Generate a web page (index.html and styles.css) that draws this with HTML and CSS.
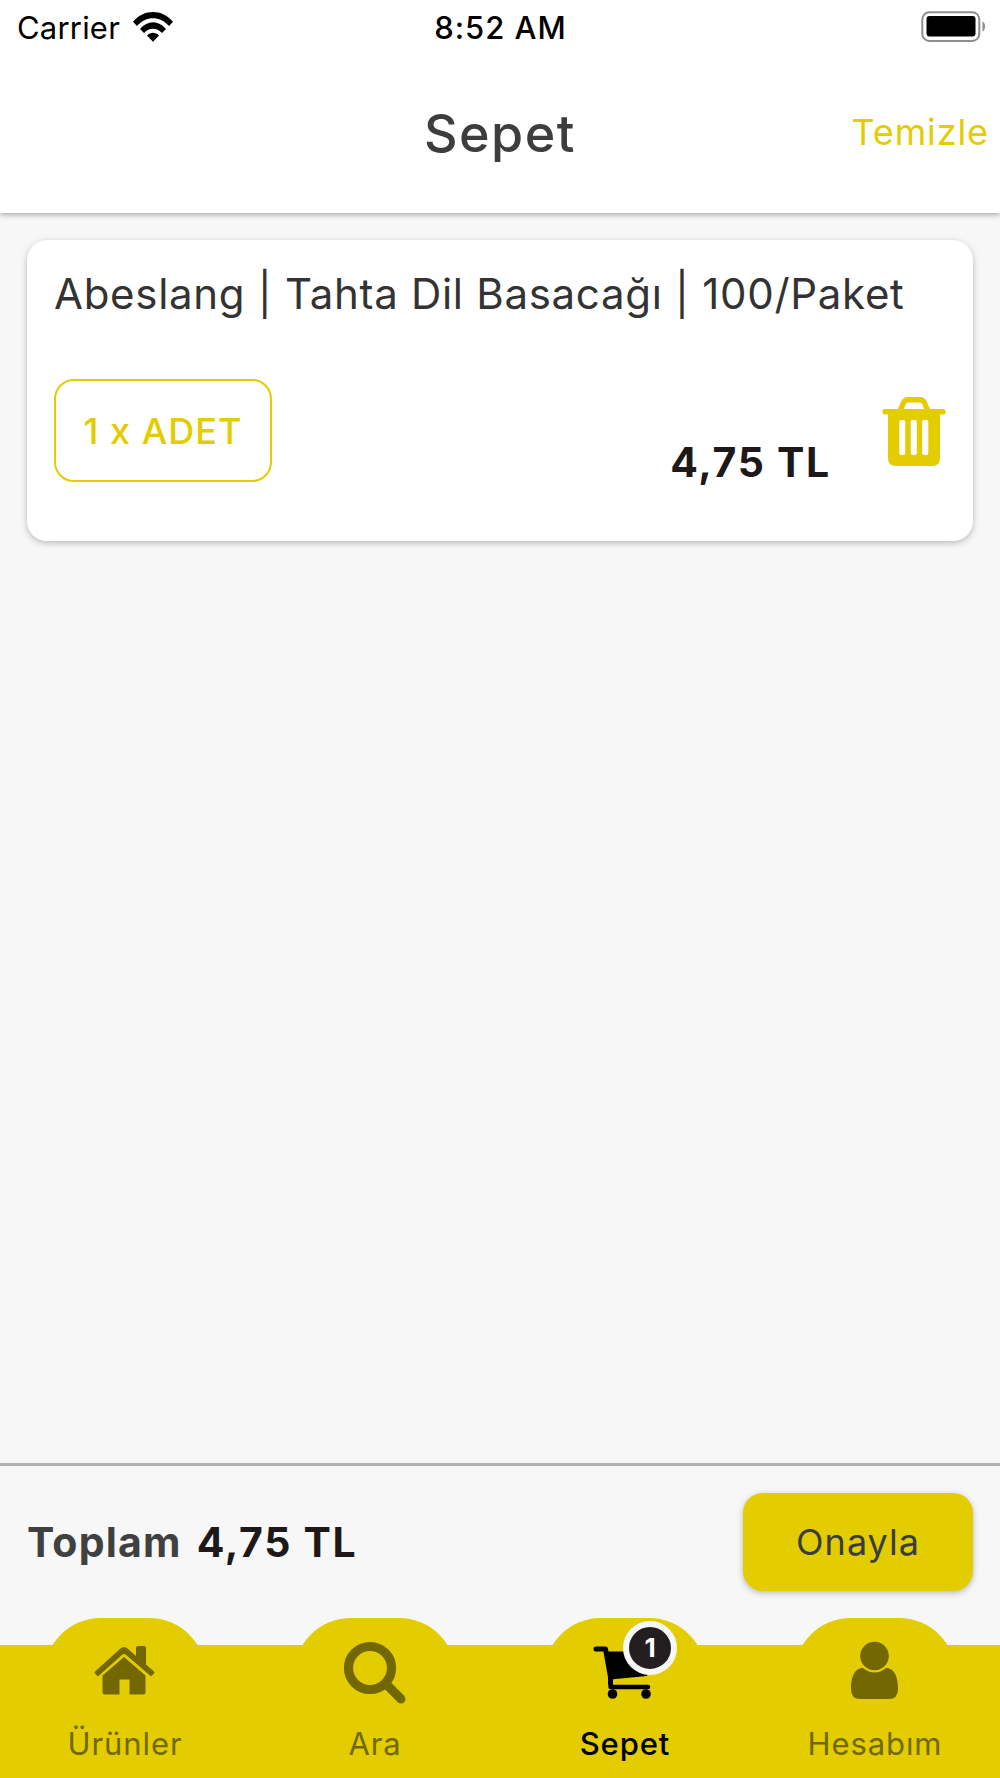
FILE: index.html
```
<!DOCTYPE html>
<html lang="tr">
<head>
  <meta charset="UTF-8">
  <meta name="viewport" content="width=device-width, initial-scale=1.0">
  <title>Sepet</title>
  <link rel="stylesheet" href="styles.css">
</head>
<body>

<div class="screen">
  <header class="header">
    <div class="status-bar">
      <div class="carrier">
        <span>Carrier</span>
        <svg class="wifi" viewBox="0 0 40 30">
          <path d="M0 9.8C11-3.2 29-3.2 40 9.8L36 14C27 3.6 13 3.6 4 14Z"/>
          <path d="M7 17C14.5 8 25.5 8 33 17L29 21C24 15.2 16 15.2 11 21Z"/>
          <path d="M14 23.6C17.5 19.8 22.5 19.8 26 23.6L20 29.8Z"/>
        </svg>
      </div>
      <span class="time">8:52 AM</span>
      <svg class="battery" viewBox="0 0 65 32">
        <rect x="1.3" y="1.3" width="57" height="28.6" rx="7" fill="none" stroke="#8e8e8e" stroke-width="2"/>
        <rect x="5.5" y="5" width="49" height="20.5" rx="3"/>
        <path d="M61.5 10.5C65 12 65 19 61.5 20.5Z" fill="#8e8e8e"/>
      </svg>
    </div>
    <div class="nav-bar">
      <h1 class="nav-title">Sepet</h1>
      <a class="nav-clear">Temizle</a>
    </div>
  </header>

  <main class="content">
    <div class="card">
      <h2 class="product-name">Abeslang | Tahta Dil Basacağı | 100/Paket</h2>
      <div class="card-row">
        <button class="unit-button">1 x ADET</button>
        <span class="price">4,75 TL</span>
        <svg class="trash" viewBox="0 0 64 70">
          <path fill-rule="evenodd" d="M2 12H16L19.5 4Q21.5 0 26 0H38Q42.5 0 44.5 4L48 12H61.5Q63.5 12 63.5 14V15.5Q63.5 17.5 61.5 17.5H58V61Q58 69 50 69H14Q6 69 6 61V17.5H2.5Q0.5 17.5 0.5 15.5V14Q0.5 12 2 12ZM22 12H42L40.5 7.5Q39.5 5.5 37.5 5.5H26.5Q24.5 5.5 23.5 7.5ZM19 23Q17.3 23 17.3 25V56Q17.3 58 19 58H21.5Q23.3 58 23.3 56V25Q23.3 23 21.5 23ZM30.5 23Q28.7 23 28.7 25V56Q28.7 58 30.5 58H33Q34.8 58 34.8 56V25Q34.8 23 33 23ZM42 23Q40.2 23 40.2 25V56Q40.2 58 42 58H44.5Q46.3 58 46.3 56V25Q46.3 23 44.5 23Z"/>
        </svg>
      </div>
    </div>
  </main>

  <div class="total-bar">
    <div class="total">
      <span class="total-label">Toplam</span>
      <span class="total-value">4,75 TL</span>
    </div>
    <button class="confirm-button">Onayla</button>
  </div>

  <nav class="tab-bar">
    <a class="tab">
      <svg class="tab-icon" viewBox="0 0 64 64">
        <path d="M2 27.5L27.5 4.5Q31 1.5 34.5 4.5L43 12V4Q43 2 45 2H51Q53 2 53 4V20.5L61 27.5Q62 28.5 61 29.5L59 31.5Q58 32.5 57 31.5L32.5 10.5Q31 9.5 29.5 10.5L6 31.5Q5 32.5 4 31.5L2 29.5Q1 28.5 2 27.5Z"/>
        <path d="M31 13L52.5 31.5V48Q52.5 50.5 50 50.5H36.5V35.5H26.5V50.5H12Q9.5 50.5 9.5 48V31.5Z"/>
      </svg>
      <span class="tab-label">Ürünler</span>
    </a>
    <a class="tab">
      <svg class="tab-icon" viewBox="0 0 64 64">
        <circle cx="27" cy="24" r="21.5" fill="none" stroke="currentColor" stroke-width="9.2"/>
        <path d="M43.5 40.5L58 55" fill="none" stroke="currentColor" stroke-width="9" stroke-linecap="round"/>
      </svg>
      <span class="tab-label">Ara</span>
    </a>
    <a class="tab active">
      <svg class="tab-icon" viewBox="0 0 64 64">
        <path d="M3 5H12.5L17.5 33V40" fill="none" stroke="currentColor" stroke-width="5" stroke-linecap="round" stroke-linejoin="round"/>
        <path d="M14 7.5H60L54 32L17.5 35.5Z"/>
        <path d="M17.5 43H55" fill="none" stroke="currentColor" stroke-width="4.5" stroke-linecap="round"/>
        <circle cx="19.5" cy="50" r="4.8"/>
        <circle cx="53" cy="50" r="4.8"/>
      </svg>
      <span class="badge">1</span>
      <span class="tab-label">Sepet</span>
    </a>
    <a class="tab">
      <svg class="tab-icon" viewBox="0 0 64 64">
        <circle cx="31.5" cy="12" r="14.3"/>
        <path d="M20 24Q31.5 33 43 24C52 24 55 34 55 45Q55 55 46 55H17Q8 55 8 45C8 34 11 24 20 24Z"/>
      </svg>
      <span class="tab-label">Hesabım</span>
    </a>
  </nav>
</div>

</body>
</html>
```
FILE: styles.css
```
* {
  box-sizing: border-box;
}

body {
  margin: 0;
  font-family: Inter, sans-serif;
  background-color: #f7f7f7;
}

.screen {
  display: flex;
  flex-direction: column;
  height: 1778px;
  overflow: hidden;
}

.header {
  height: 213px;
  background-color: #fff;
  box-shadow: 0 2px 5px rgba(0, 0, 0, 0.3);
}

.status-bar {
  display: grid;
  grid-template-columns: 1fr auto 1fr;
  align-items: center;
  height: 54px;
  padding: 0 14px 0 17px;
  font-size: 31px;
}

.carrier {
  display: flex;
  align-items: center;
  gap: 13px;
  letter-spacing: 0.2px;
}

.wifi {
  width: 40px;
  height: 30px;
}

.time {
  padding-right: 2px;
  font-weight: 500;
  letter-spacing: 1px;
}

.battery {
  justify-self: end;
  width: 65px;
  height: 32px;
}

.nav-bar {
  display: grid;
  grid-template-columns: 1fr auto 1fr;
  align-items: center;
  height: 159px;
  padding: 0 11px;
}

.nav-title {
  grid-column: 2;
  margin: 0;
  font-size: 52px;
  font-weight: 500;
  letter-spacing: 1.5px;
  color: #3d3d3d;
}

.nav-clear {
  justify-self: end;
  padding-bottom: 3px;
  font-size: 36px;
  letter-spacing: 0.9px;
  color: #e3cd00;
}

.content {
  flex: 1;
  padding: 27px;
}

.card {
  height: 301px;
  padding: 27px;
  border-radius: 20px;
  background-color: #fff;
  box-shadow: 0 2px 6px rgba(0, 0, 0, 0.25);
}

.product-name {
  margin: 0;
  font-size: 42px;
  font-weight: 400;
  line-height: 53px;
  letter-spacing: 0.7px;
  color: #333;
  white-space: nowrap;
}

.card-row {
  display: flex;
  align-items: flex-start;
  margin-top: 59px;
}

.unit-button {
  width: 218px;
  height: 103px;
  padding: 0;
  border: 2px solid #e3cd00;
  border-radius: 20px;
  background: none;
  font-family: inherit;
  font-size: 36px;
  font-weight: 500;
  letter-spacing: 1px;
  color: #e3cd00;
}

.price {
  margin: 58px 51px 0 auto;
  font-size: 41px;
  font-weight: 700;
  line-height: 50px;
  letter-spacing: 1.7px;
  color: #1d1919;
}

.trash {
  width: 64px;
  height: 70px;
  margin-top: 18px;
  fill: #e3cd00;
}

.total-bar {
  display: flex;
  align-items: center;
  justify-content: space-between;
  height: 155px;
  padding: 0 27px;
  border-top: 3px solid #b0b0b0;
}

.total {
  display: flex;
  gap: 15px;
  font-size: 41px;
  font-weight: 700;
}

.total-label {
  letter-spacing: 1.2px;
  color: #404040;
}

.total-value {
  letter-spacing: 1.7px;
  color: #1d1919;
}

.confirm-button {
  width: 230px;
  height: 98px;
  border: none;
  border-radius: 20px;
  background-color: #e3cd00;
  box-shadow: 0 2px 6px rgba(0, 0, 0, 0.25);
  font-family: inherit;
  font-size: 36px;
  letter-spacing: 1px;
  color: #3a3d40;
}

.tab-bar {
  display: grid;
  grid-template-columns: repeat(4, 1fr);
  height: 160px;
  background: linear-gradient(transparent 27px, #e3cd00 27px);
}

.tab {
  position: relative;
  display: flex;
  flex-direction: column;
  align-items: center;
  justify-self: center;
  width: 162px;
  border-radius: 57px 57px 0 0;
  background-color: #e3cd00;
  color: #726700;
}

.tab.active {
  color: #000;
}

.tab-icon {
  width: 64px;
  height: 64px;
  margin-top: 26px;
  overflow: visible;
  fill: currentColor;
}

.tab-label {
  margin-top: 17px;
  font-size: 31px;
  line-height: 38px;
  letter-spacing: 0.9px;
}

.active .tab-label {
  font-weight: 500;
}

.badge {
  position: absolute;
  top: 3px;
  left: 79px;
  width: 54px;
  height: 54px;
  border: 6px solid #f7f7f7;
  border-radius: 50%;
  background-color: #231f20;
  font-size: 26px;
  font-weight: 700;
  line-height: 42px;
  text-align: center;
  color: #fff;
}
```
